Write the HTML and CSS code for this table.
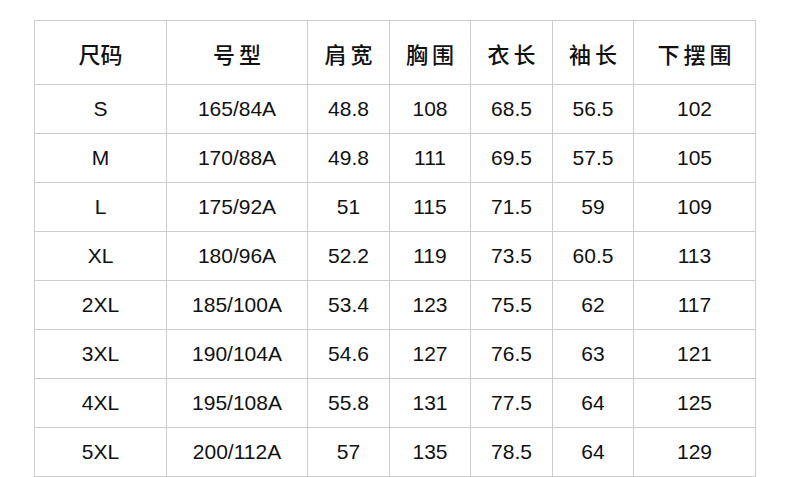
FILE: index.html
```html
<!DOCTYPE html>
<html lang="zh">
<head>
<meta charset="utf-8">
<title>尺码表</title>
<link rel="stylesheet" href="styles.css">
</head>
<body>
<table class="size-table">
  <colgroup>
    <col class="c1"><col class="c2"><col class="c3"><col class="c4"><col class="c5"><col class="c6"><col class="c7">
  </colgroup>
  <thead>
    <tr>
      <th class="tight">尺码</th><th>号型</th><th>肩宽</th><th>胸围</th><th>衣长</th><th>袖长</th><th>下摆围</th>
    </tr>
  </thead>
  <tbody>
    <tr><td>S</td><td>165/84A</td><td>48.8</td><td>108</td><td>68.5</td><td>56.5</td><td>102</td></tr>
    <tr><td>M</td><td>170/88A</td><td>49.8</td><td>111</td><td>69.5</td><td>57.5</td><td>105</td></tr>
    <tr><td>L</td><td>175/92A</td><td>51</td><td>115</td><td>71.5</td><td>59</td><td>109</td></tr>
    <tr><td>XL</td><td>180/96A</td><td>52.2</td><td>119</td><td>73.5</td><td>60.5</td><td>113</td></tr>
    <tr><td>2XL</td><td>185/100A</td><td>53.4</td><td>123</td><td>75.5</td><td>62</td><td>117</td></tr>
    <tr><td>3XL</td><td>190/104A</td><td>54.6</td><td>127</td><td>76.5</td><td>63</td><td>121</td></tr>
    <tr><td>4XL</td><td>195/108A</td><td>55.8</td><td>131</td><td>77.5</td><td>64</td><td>125</td></tr>
    <tr><td>5XL</td><td>200/112A</td><td>57</td><td>135</td><td>78.5</td><td>64</td><td>129</td></tr>
  </tbody>
</table>
</body>
</html>
```
FILE: styles.css
```css
html, body {
  margin: 0;
  padding: 0;
  background: #fff;
}
body {
  padding: 20px 0 0 34px;
}
.size-table {
  border-collapse: collapse;
  table-layout: fixed;
  width: 722px;
  color: #111;
}
.c1 { width: 132px; }
.c2 { width: 141px; }
.c3 { width: 82px; }
.c4 { width: 81px; }
.c5 { width: 82px; }
.c6 { width: 81px; }
.c7 { width: 122px; }
.size-table th,
.size-table td {
  border: 1px solid #cccccc;
  text-align: center;
  vertical-align: middle;
  padding: 0;
}
.size-table th {
  height: 63px;
  font-family: "Noto Sans CJK SC", sans-serif;
  font-size: 22px;
  font-weight: 500;
  letter-spacing: 4px;
  text-indent: 4px;
}
.size-table th.tight {
  letter-spacing: 0;
  text-indent: 0;
}
.size-table td {
  height: 48px;
  font-family: "Liberation Sans", sans-serif;
  font-size: 21px;
  font-weight: 400;
}
```
